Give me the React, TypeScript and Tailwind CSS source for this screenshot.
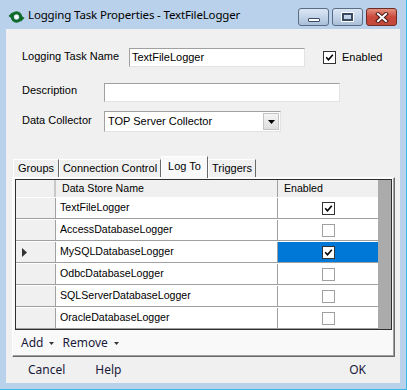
import React from "react";

const rows = [
  { name: "TextFileLogger", on: true },
  { name: "AccessDatabaseLogger", on: false },
  { name: "MySQLDatabaseLogger", on: true, current: true },
  { name: "OdbcDatabaseLogger", on: false },
  { name: "SQLServerDatabaseLogger", on: false },
  { name: "OracleDatabaseLogger", on: false },
];

const Check = ({ on, dark }: { on: boolean; dark?: boolean }) => (
  <div
    className={`w-[13px] h-[13px] bg-white border flex items-center justify-center ${
      on || dark ? "border-[#333333]" : "border-[#a0a0a0]"
    }`}
  >
    {on && (
      <svg width="9" height="9" viewBox="0 0 9 9">
        <path d="M1.2 4.3 L3.5 6.8 L7.8 1.8" fill="none" stroke="#000" strokeWidth="1.6" />
      </svg>
    )}
  </div>
);

const TitleButton = ({ kind }: { kind: "min" | "max" | "close" }) => {
  const close = kind === "close";
  return (
    <div
      className={`h-[18px] flex items-center justify-center rounded-[3px] border ${
        close
          ? "w-[31px] border-[#6e2a24] bg-gradient-to-b from-[#e4907f] via-[#c9483a] to-[#c24a3c]"
          : "w-[31px] border-[#5b6c85] bg-gradient-to-b from-[#dbe6f3] via-[#c3d4e8] to-[#a9bfd8]"
      }`}
    >
      {kind === "min" && (
        <div className="mt-[6px] w-[12px] h-[4px] bg-white border border-[#3b4a63] rounded-[1px]" />
      )}
      {kind === "max" && (
        <div className="w-[11px] h-[8px] border-[2px] border-[#3b4a63] bg-transparent shadow-[0_0_0_1px_#ffffff]" />
      )}
      {close && (
        <svg width="14" height="11" viewBox="0 0 14 11">
          <path d="M3 2 L11 9 M11 2 L3 9" stroke="#4a1a16" strokeWidth="4" strokeLinecap="square" />
          <path d="M3 2 L11 9 M11 2 L3 9" stroke="#ffffff" strokeWidth="2" strokeLinecap="square" />
        </svg>
      )}
    </div>
  );
};

const Tab = ({ label, w, active }: { label: string; w: string; active?: boolean }) => (
  <div
    className={`${w} flex items-center justify-center border-t border-l border-r border-t-white border-l-white border-r-[#696969] ${
      active ? "h-[22px] bg-[#f9f9f9] -mb-[1px] z-10 relative" : "h-[18px] bg-[#f0f0f0]"
    }`}
  >
    <span className={active ? "-mt-[3px]" : ""}>{label}</span>
  </div>
);

export default function App() {
  return (
    <div className="w-[407px] h-[390px] bg-[#b9d1ea] border-r border-b border-[#3db6e8] flex flex-col overflow-hidden font-['Liberation_Sans',Arial,sans-serif] text-[11px] text-black">
      {/* Title bar */}
      <div className="h-[29px] flex items-start shrink-0">
        <svg className="ml-[8px] mt-[10px]" width="17" height="14" viewBox="0 0 17 14">
          <circle cx="8.5" cy="7" r="4.2" fill="none" stroke="#0f6b2a" strokeWidth="3" />
          <path d="M0.5 6 L4.5 2 L4.5 9 Z" fill="#0f6b2a" />
          <path d="M16.5 8 L12.5 12 L12.5 5 Z" fill="#0f6b2a" />
          <circle cx="8.5" cy="7" r="2" fill="#ffffff" />
        </svg>
        <div className="ml-[3px] mt-[7px] font-['Noto_Sans',sans-serif] text-[11.5px] leading-[16px] tracking-[-0.15px]">
          Logging Task Properties - TextFileLogger
        </div>
        <div className="ml-auto mr-[9px] mt-[8px] flex gap-[3px]">
          <TitleButton kind="min" />
          <TitleButton kind="max" />
          <TitleButton kind="close" />
        </div>
      </div>

      {/* Client area */}
      <div className="mx-[6px] h-[354px] bg-[#f0f0f0] flex flex-col shrink-0">
        <div className="pl-[16px]">
          <div className="mt-[19px] h-[19px] flex items-center">
            <div className="w-[107px] -mt-[2px]">Logging Task Name</div>
            <div className="w-[176px] h-[19px] bg-white border border-[#a0a0a0] border-r-[#e3e3e3] border-b-[#e3e3e3] flex items-center pl-[2px]">
              TextFileLogger
            </div>
            <div className="ml-[18px]">
              <Check on dark />
            </div>
            <div className="ml-[6px]">Enabled</div>
          </div>
          <div className="mt-[16px] h-[19px] flex items-center">
            <div className="w-[82px] -mt-[4px]">Description</div>
            <div className="w-[236px] h-[19px] bg-white border border-[#a0a0a0] border-r-[#e3e3e3] border-b-[#e3e3e3]" />
          </div>
          <div className="mt-[9px] h-[21px] flex items-center">
            <div className="w-[82px] -mt-[3px]">Data Collector</div>
            <div className="w-[177px] h-[21px] bg-white border border-[#a0a0a0] border-r-[#e3e3e3] border-b-[#e3e3e3] flex items-center">
              <span className="pl-[3px]">TOP Server Collector</span>
              <div className="ml-auto mr-[1px] w-[16px] h-[17px] border border-[#c4c4c4] bg-gradient-to-b from-[#f4f4f4] to-[#dedede] flex items-center justify-center">
                <svg width="7" height="4" viewBox="0 0 7 4">
                  <path d="M0 0 L7 0 L3.5 4 Z" fill="#000" />
                </svg>
              </div>
            </div>
          </div>
        </div>

        {/* Tabs */}
        <div className="ml-[6px] mt-[24px] h-[21px] flex items-end">
          <div className="ml-[1px] flex items-end">
            <Tab label="Groups" w="w-[46px]" />
            <Tab label="Connection Control" w="w-[102px]" />
            <Tab label="Log To" w="w-[47px]" active />
            <Tab label="Triggers" w="w-[48px]" />
          </div>
        </div>

        <div className="ml-[6px] w-[383px] h-[180px] bg-[#f9f9f9] border border-t-white border-l-white border-r-[#696969] border-b-[#696969] shadow-[inset_-1px_-1px_0_#a0a0a0] flex flex-col">
          {/* Grid */}
          <div className="ml-[2px] mt-[1px] w-[377px] border border-[#2e2e2e] flex text-[10.6px]">
            <div className="w-[362px] flex flex-col">
              <div className="h-[17px] flex bg-[#f0f0f0]">
                <div className="w-[40px] border-r-[2px] border-r-[#c8c8c8]" />
                <div className="w-[222px] border-r border-r-[#a0a0a0] pl-[6px] flex items-center">
                  Data Store Name
                </div>
                <div className="w-[100px] pl-[6px] flex items-center">Enabled</div>
              </div>
              {rows.map((r) => (
                <div key={r.name} className="h-[22px] flex border-t border-t-white">
                  <div className="w-[40px] bg-[#f0f0f0] border-r border-r-[#a0a0a0] border-b border-b-[#a0a0a0] flex items-center">
                    {r.current && (
                      <svg className="ml-[6px]" width="5" height="9" viewBox="0 0 5 9">
                        <path d="M0 0 L5 4.5 L0 9 Z" fill="#333" />
                      </svg>
                    )}
                  </div>
                  <div className="w-[222px] bg-white border-r border-r-[#a0a0a0] border-b border-b-[#a0a0a0] pl-[4px] flex items-center">
                    {r.name}
                  </div>
                  <div
                    className={`w-[100px] border-b border-b-[#a0a0a0] flex items-center justify-center ${
                      r.current ? "bg-[#0078d7]" : "bg-white"
                    }`}
                  >
                    <Check on={r.on} />
                  </div>
                </div>
              ))}
            </div>
            <div className="w-[13px] bg-[#ababab]" />
          </div>

          {/* Toolstrip */}
          <div className="flex-1 flex items-center pl-[8px] font-['Noto_Sans',sans-serif] text-[12px] text-[#1a1a3a]">
            <div className="flex items-center">
              <span>Add</span>
              <svg className="ml-[6px]" width="5" height="3" viewBox="0 0 5 3">
                <path d="M0 0 L5 0 L2.5 3 Z" fill="#333" />
              </svg>
            </div>
            <div className="ml-[8px] flex items-center">
              <span>Remove</span>
              <svg className="ml-[6px]" width="5" height="3" viewBox="0 0 5 3">
                <path d="M0 0 L5 0 L2.5 3 Z" fill="#333" />
              </svg>
            </div>
          </div>
        </div>

        {/* Bottom buttons */}
        <div className="flex-1 flex items-center font-['Noto_Sans',sans-serif] text-[12px] text-[#1a1a3a]">
          <span className="ml-[22px]">Cancel</span>
          <span className="ml-[30px]">Help</span>
          <span className="ml-auto mr-[34px]">OK</span>
        </div>
      </div>
    </div>
  );
}
